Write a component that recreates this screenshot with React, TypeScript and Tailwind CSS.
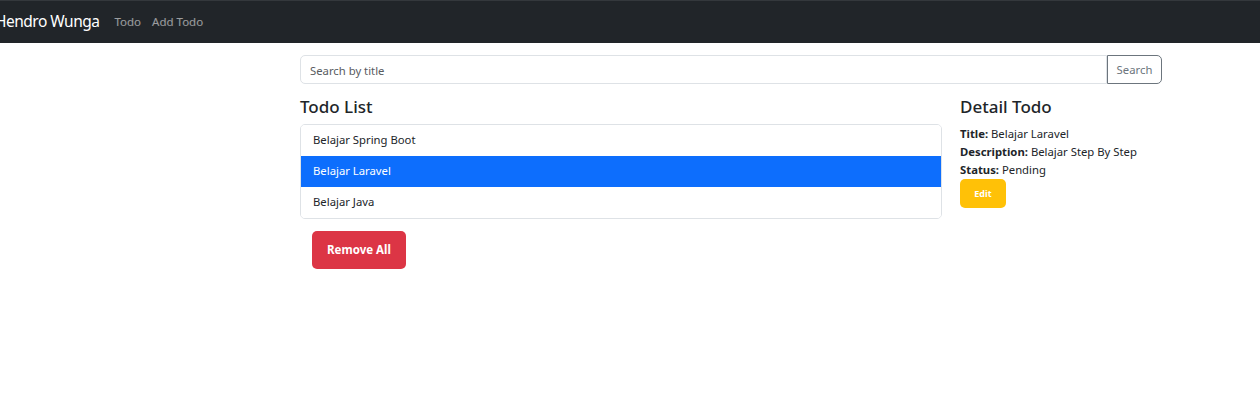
const todos = ["Belajar Spring Boot", "Belajar Laravel", "Belajar Java"];

export default function App() {
  const activeIndex = 1;

  return (
    <div className="min-h-[414px] bg-white text-[#212529] font-['Noto_Sans',sans-serif]">
      <nav className="flex h-[43px] items-center border-t border-[#34383c] bg-[#212529]">
        <a className="-ml-[5px] whitespace-nowrap text-[15.5px] tracking-[-0.5px] text-white">Hendro Wunga</a>
        <div className="ml-[15px] flex gap-[11px] text-[11.5px] text-white/55">
          <a>Todo</a>
          <a>Add Todo</a>
        </div>
      </nav>

      <div className="ml-[300px] w-[862px] pt-[12px]">
        <div className="flex h-[29px]">
          <input
            className="h-full flex-1 rounded-l-[5px] border border-[#dee2e6] px-[9px] pt-[1px] text-[11.3px] outline-none placeholder:text-[#595c5f]"
            placeholder="Search by title"
          />
          <button className="h-full w-[55px] rounded-r-[5px] border border-[#6c757d] pt-[1px] text-[11.3px] text-[#6c757d]">
            Search
          </button>
        </div>

        <div className="mt-[12px] flex gap-[18px]">
          <div className="w-[642px]">
            <h4 className="mb-[6px] text-[17px] font-medium leading-[22px]">Todo List</h4>
            <ul className="overflow-hidden rounded-[5px] border border-[#dee2e6] text-[11.3px]">
              {todos.map((todo, i) => (
                <li
                  key={todo}
                  className={`flex h-[31px] items-center px-[12px] ${
                    i === activeIndex ? "bg-[#0d6efd] text-white" : "bg-white"
                  } ${i > 0 && i !== activeIndex && i - 1 !== activeIndex ? "border-t border-[#dee2e6]" : ""}`}
                >
                  {todo}
                </li>
              ))}
            </ul>
            <button className="ml-[12px] mt-[12px] h-[38px] w-[94px] rounded-[5px] bg-[#dc3545] text-[11.5px] font-bold text-white">
              Remove All
            </button>
          </div>

          <div className="flex-1">
            <h4 className="mb-[6px] text-[17px] font-medium leading-[22px]">Detail Todo</h4>
            <div className="pt-[1px] text-[11.3px] leading-[18px]">
              <div>
                <span className="font-bold">Title:</span> Belajar Laravel
              </div>
              <div>
                <span className="font-bold">Description:</span> Belajar Step By Step
              </div>
              <div>
                <span className="font-bold">Status:</span> Pending
              </div>
            </div>
            <button className="h-[29px] w-[46px] rounded-[5px] bg-[#ffc107] text-[9px] font-bold text-white">
              Edit
            </button>
          </div>
        </div>
      </div>
    </div>
  );
}
